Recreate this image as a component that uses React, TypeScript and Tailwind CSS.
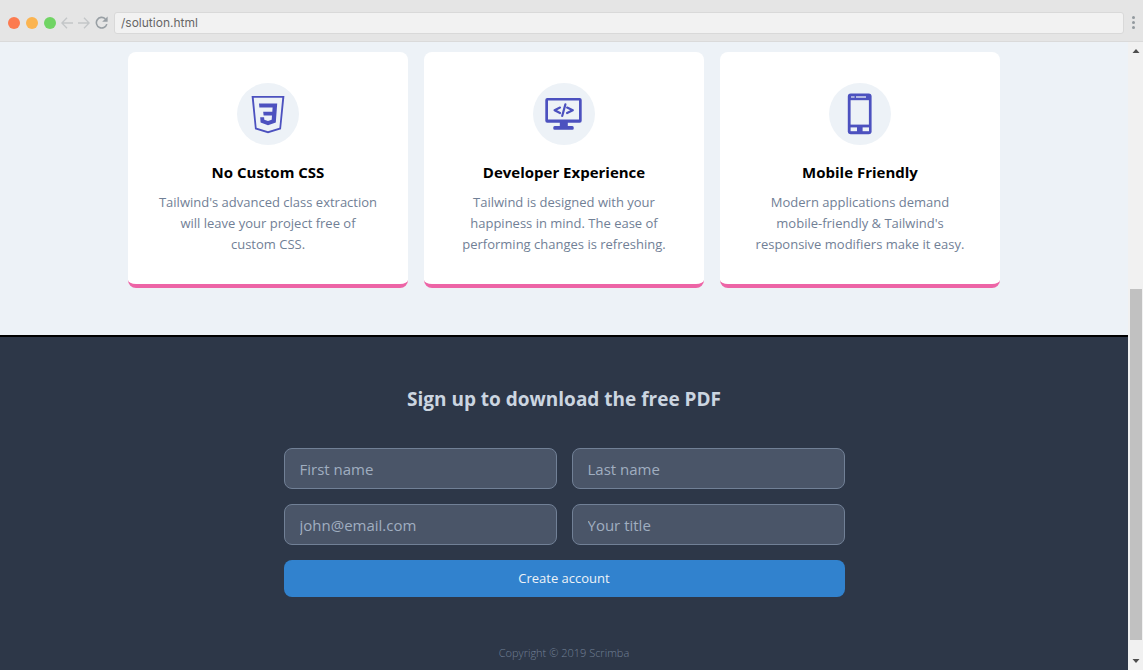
import type { ReactNode } from "react";

function Css3Icon() {
  return (
    <svg viewBox="0 0 62 62" className="h-full w-full" fill="#4c51bf" aria-hidden="true">
      <path fillRule="evenodd" d="M14.6 13H47.4L44 46.2L31 50.2L18 46.2ZM16.7 14.8L19.6 44.8L31 48.2L42.4 44.8L45.3 14.8Z" />
      <path d="M22 20.6H40.2L38.8 39.4L31 42.3L23.6 39.4L23.2 34.2H27.1L27.3 36.7L31 38.1L34.7 36.7L35 32.4H26.6L26.2 28.8H35.3L35.6 24.5H22.4Z" />
    </svg>
  );
}

function MonitorIcon() {
  return (
    <svg viewBox="0 0 62 62" className="h-full w-full" fill="#4c51bf" aria-hidden="true">
      <path fillRule="evenodd" d="M14.3 15H46.7Q48.7 15 48.7 17V37.8Q48.7 39.8 46.7 39.8H34.8V43H39.3Q40.8 43 40.8 44.9Q40.8 46.8 39.3 46.8H21.7Q20.2 46.8 20.2 44.9Q20.2 43 21.7 43H26.8V39.8H14.3Q12.3 39.8 12.3 37.8V17Q12.3 15 14.3 15ZM15 17.6V36.6H46V17.6Z" />
      <path d="M27 24.6L21.6 27.2L27 30M34.1 24.6L39.8 27.2L34.1 30M32.4 21.4L29.2 33" fill="none" stroke="#4c51bf" strokeWidth="2.2" strokeLinecap="round" strokeLinejoin="round" />
    </svg>
  );
}

function PhoneIcon() {
  return (
    <svg viewBox="0 0 62 62" className="h-full w-full" aria-hidden="true">
      <rect x="18.8" y="10.6" width="23.8" height="40.6" rx="3" fill="#4c51bf" />
      <g fill="#edf2f7">
        <rect x="21.6" y="17.2" width="18.3" height="24.4" />
        <rect x="21.6" y="44.4" width="6.4" height="3.8" />
        <rect x="33.6" y="44.4" width="6.4" height="3.8" />
        <rect x="22" y="13.2" width="3.6" height="1.6" opacity="0.7" />
        <rect x="27" y="13.2" width="10" height="1.6" opacity="0.8" />
      </g>
    </svg>
  );
}

function BrowserBar() {
  return (
    <header className="flex h-[42px] items-center border-b border-[#dadada] bg-[#e5e5e5] pt-1 pl-2 pr-2">
      <div className="flex gap-[6px]">
        <span className="h-3 w-3 rounded-full bg-[#fc7b50]" />
        <span className="h-3 w-3 rounded-full bg-[#fbb450]" />
        <span className="h-3 w-3 rounded-full bg-[#70d464]" />
      </div>
      <div className="ml-[5px] flex items-center gap-[5px] text-[#c3c6c8]">
        <button type="button" aria-label="Back">
          <svg viewBox="0 0 12 12" className="h-3 w-3" fill="none" stroke="currentColor" strokeWidth="1.3" aria-hidden="true">
            <path d="M12 6H1.2M6 .8L.9 6L6 11.2" />
          </svg>
        </button>
        <button type="button" aria-label="Forward">
          <svg viewBox="0 0 12 12" className="h-3 w-3" fill="none" stroke="currentColor" strokeWidth="1.3" aria-hidden="true">
            <path d="M0 6H10.8M6 .8L11.1 6L6 11.2" />
          </svg>
        </button>
        <button type="button" aria-label="Reload" className="text-[#989fa4]">
          <svg viewBox="0 0 13 13" className="h-[13px] w-[13px]" fill="none" aria-hidden="true">
            <path d="M11.8 8.1A5.3 5.3 0 1 1 10.3 2.8" stroke="currentColor" strokeWidth="1.6" />
            <path d="M12.6 .4V5.8H7.2Z" fill="currentColor" />
          </svg>
        </button>
      </div>
      <input
        type="text"
        aria-label="Address"
        defaultValue="/solution.html"
        className="ml-[6px] h-[22px] min-w-0 flex-1 rounded-[3px] border border-[#d9d9d9] bg-[#f2f2f2] px-[6px] font-['Inter',sans-serif] text-[12px] text-[#666666]"
      />
      <button type="button" aria-label="Menu" className="ml-2 flex flex-col items-center gap-[2px]">
        <span className="h-[3px] w-[3px] rounded-full bg-[#92999e]" />
        <span className="h-[3px] w-[3px] rounded-full bg-[#92999e]" />
        <span className="h-[3px] w-[3px] rounded-full bg-[#92999e]" />
      </button>
    </header>
  );
}

function Feature({ icon, title, children }: { icon: ReactNode; title: string; children: ReactNode }) {
  return (
    <article className="rounded-lg border-b-4 border-[#ed64a6] bg-white px-[30px] pt-[31px] pb-[29px] text-center">
      <div className="mx-auto h-[62px] w-[62px] rounded-full bg-[#edf2f7]">{icon}</div>
      <h2 className="mt-[15px] text-[15px] leading-6 font-bold text-black">{title}</h2>
      <p className="mt-2 text-[13px] leading-[21px] text-[#718096]">{children}</p>
    </article>
  );
}

function Field({ label, type = "text" }: { label: string; type?: string }) {
  return (
    <input
      type={type}
      aria-label={label}
      placeholder={label}
      className="h-[41px] w-full rounded-lg border border-[#718096] bg-[#4a5568] px-[15px] text-[15px] text-[#edf2f7] placeholder:text-[#a0aec0]"
    />
  );
}

function ScrollTrack() {
  return (
    <div className="flex w-[15px] flex-col items-center bg-[#f1f1f1]" aria-hidden="true">
      <svg viewBox="0 0 15 15" className="h-[15px] w-[15px]" fill="#4d4d4d">
        <path d="M4.5 11L8 7L11.5 11Z" />
      </svg>
      <div className="flex-[232]" />
      <div className="ml-px w-3 flex-[351] bg-[#c1c1c1]" />
      <div className="flex-[15]" />
      <svg viewBox="0 0 15 15" className="h-[15px] w-[15px]" fill="#4d4d4d">
        <path d="M4.5 4L8 8L11.5 4Z" />
      </svg>
    </div>
  );
}

export default function App() {
  return (
    <div className="flex min-h-screen flex-col font-['Open_Sans','Noto_Sans',sans-serif]">
      <BrowserBar />
      <div className="flex flex-1">
        <main className="flex min-w-0 flex-1 flex-col bg-[#edf2f7]">
          <section className="border-b-2 border-black px-4 pt-[10px] pb-[47px]">
            <div className="mx-auto grid max-w-[872px] gap-4 sm:grid-cols-3">
              <Feature icon={<Css3Icon />} title="No Custom CSS">
                Tailwind's advanced class extraction will leave your project free of custom CSS.
              </Feature>
              <Feature icon={<MonitorIcon />} title="Developer Experience">
                Tailwind is designed with your happiness in mind. The ease of performing changes is refreshing.
              </Feature>
              <Feature icon={<PhoneIcon />} title="Mobile Friendly">
                Modern applications demand mobile-friendly &amp; Tailwind's responsive modifiers make it easy.
              </Feature>
            </div>
          </section>
          <section className="flex-1 bg-[#2d3748] px-4 pt-12 text-center">
            <h2 className="text-[19px] leading-7 font-bold text-[#cbd5e0]">Sign up to download the free PDF</h2>
            <form className="mx-auto mt-[35px] grid max-w-[561px] gap-[15px] sm:grid-cols-2">
              <Field label="First name" />
              <Field label="Last name" />
              <Field label="john@email.com" type="email" />
              <Field label="Your title" />
              <button type="button" className="h-[37px] rounded-lg bg-[#3182ce] text-[13px] font-medium text-[#edf2f7] sm:col-span-2">
                Create account
              </button>
            </form>
            <footer className="mt-12 pb-2 text-[11px] leading-4 font-light text-[#718096]">Copyright © 2019 Scrimba</footer>
          </section>
        </main>
        <ScrollTrack />
      </div>
    </div>
  );
}
